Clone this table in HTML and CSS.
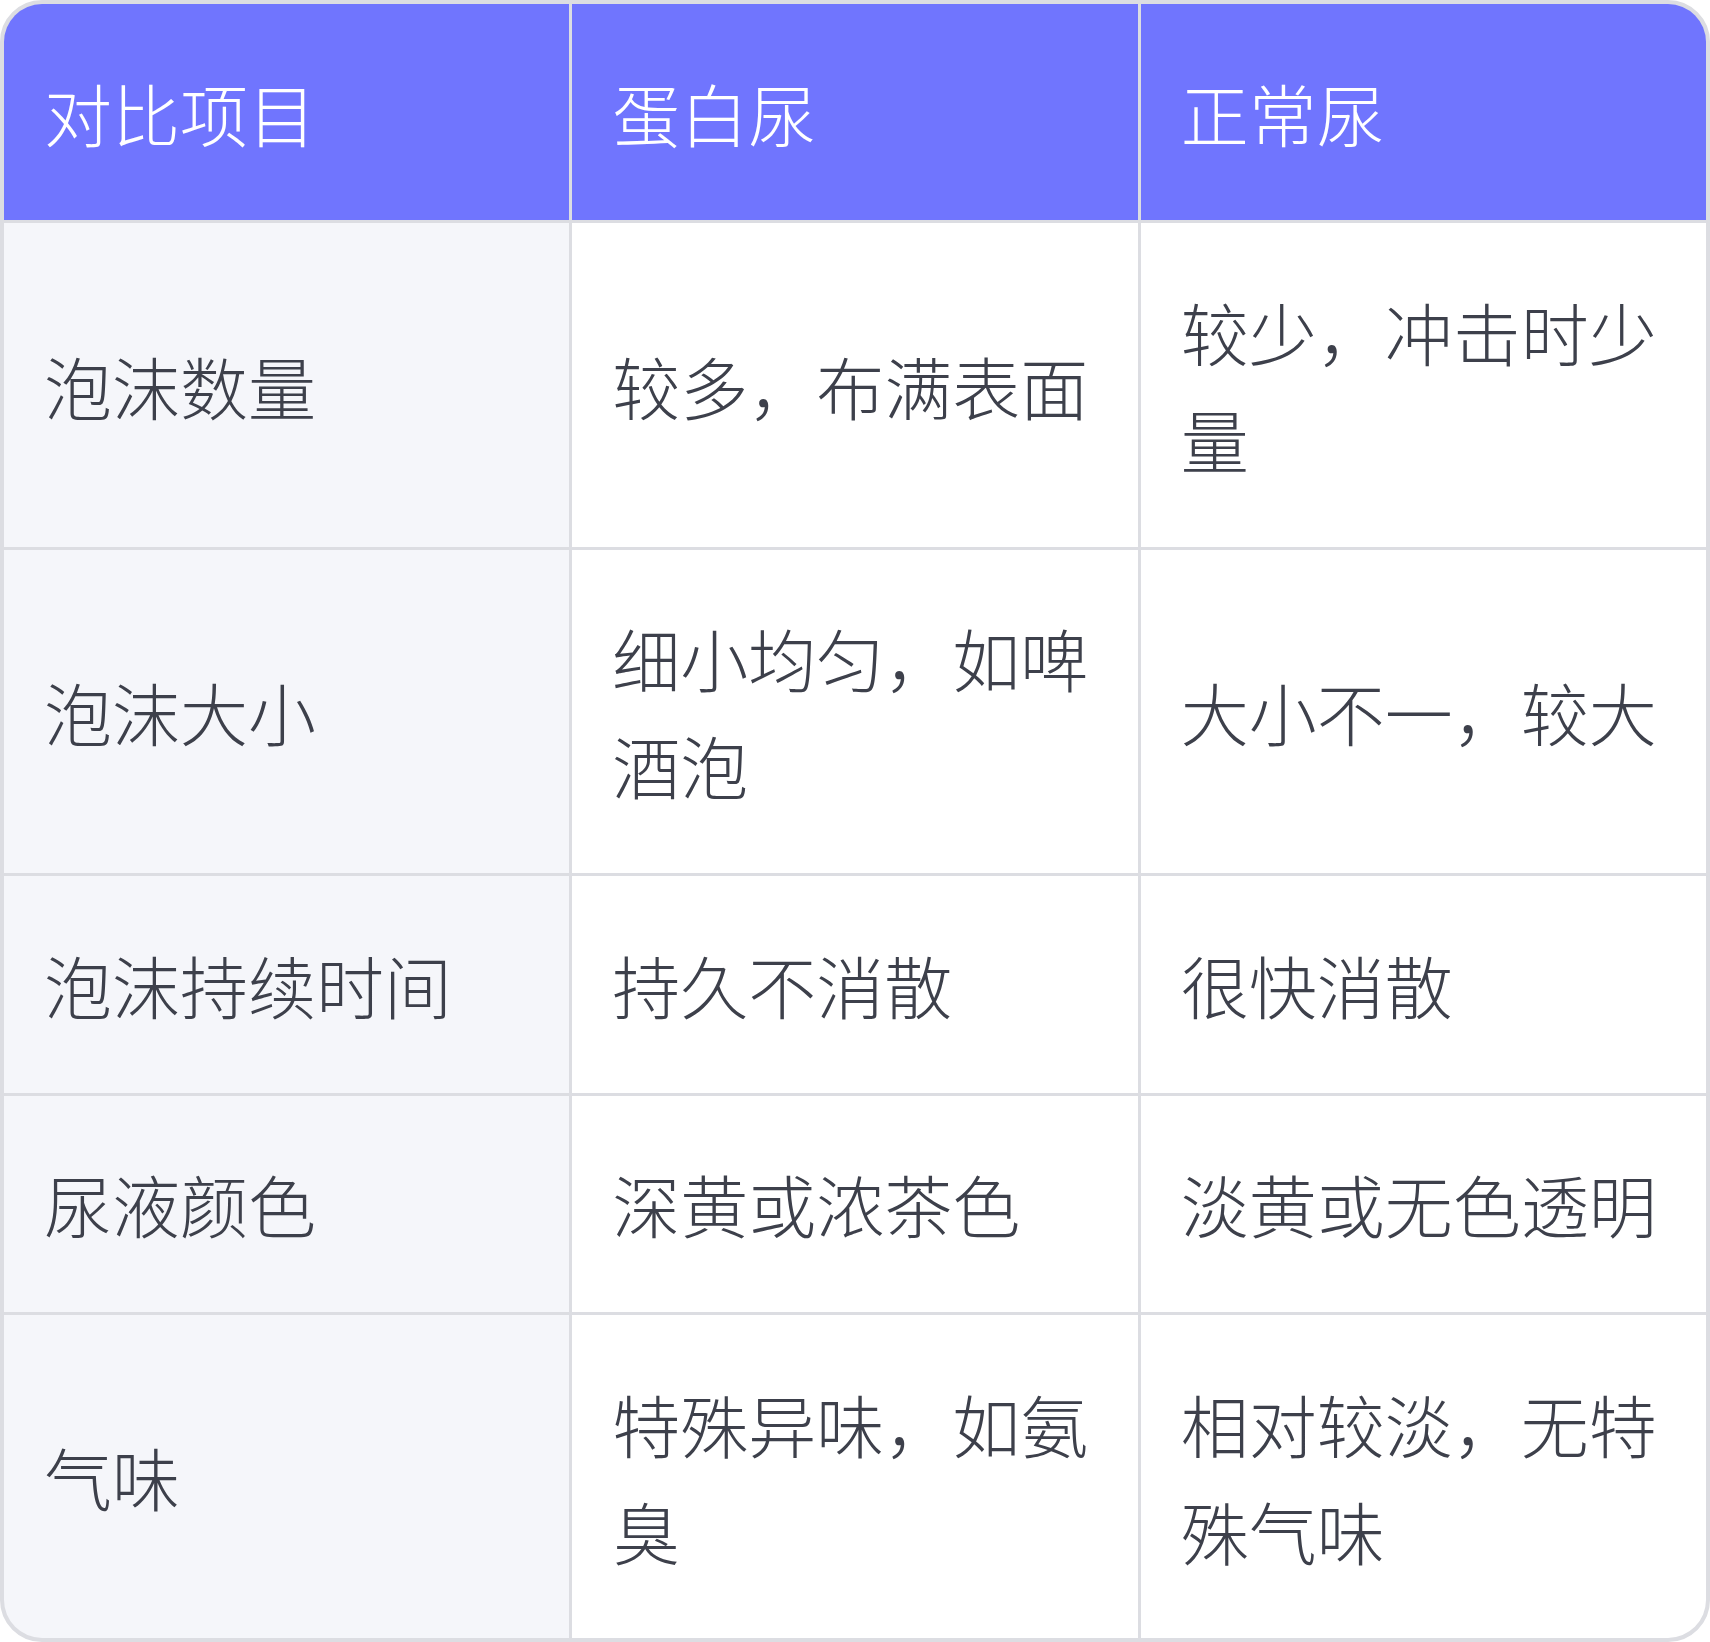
FILE: index.html
```html
<!DOCTYPE html>
<html lang="zh-CN">
<head>
<meta charset="utf-8">
<title>蛋白尿与正常尿对比</title>
<link rel="stylesheet" href="styles.css">
</head>
<body>
<div class="table">
  <div class="cell head">对比项目</div>
  <div class="cell head">蛋白尿</div>
  <div class="cell head">正常尿</div>

  <div class="cell key">泡沫数量</div>
  <div class="cell">较多，布满表面</div>
  <div class="cell">较少，冲击时少量</div>

  <div class="cell key">泡沫大小</div>
  <div class="cell">细小均匀，如啤酒泡</div>
  <div class="cell">大小不一，较大</div>

  <div class="cell key">泡沫持续时间</div>
  <div class="cell">持久不消散</div>
  <div class="cell">很快消散</div>

  <div class="cell key">尿液颜色</div>
  <div class="cell">深黄或浓茶色</div>
  <div class="cell">淡黄或无色透明</div>

  <div class="cell key">气味</div>
  <div class="cell">特殊异味，如氨臭</div>
  <div class="cell">相对较淡，无特殊气味</div>
</div>
</body>
</html>
```

FILE: styles.css
```css
html, body {
  margin: 0;
  padding: 0;
  background: #ffffff;
}

body {
  font-family: "Noto Sans CJK SC", "Noto Sans", sans-serif;
  font-weight: 300;
  color: #3d404b;
}

.table {
  box-sizing: border-box;
  width: 1710px;
  border: 4px solid #dcdde2;
  border-radius: 42px;
  overflow: hidden;
  background: #dcdde2;
  display: grid;
  grid-template-columns: repeat(3, 1fr);
  gap: 3px;
}

.cell {
  background: #ffffff;
  font-size: 68px;
  line-height: 107px;
  padding: 54.7px 40px;
  display: flex;
  align-items: center;
}

.head {
  background: #7075fe;
  color: #ffffff;
}

.key {
  background: #f5f6fa;
}
```
